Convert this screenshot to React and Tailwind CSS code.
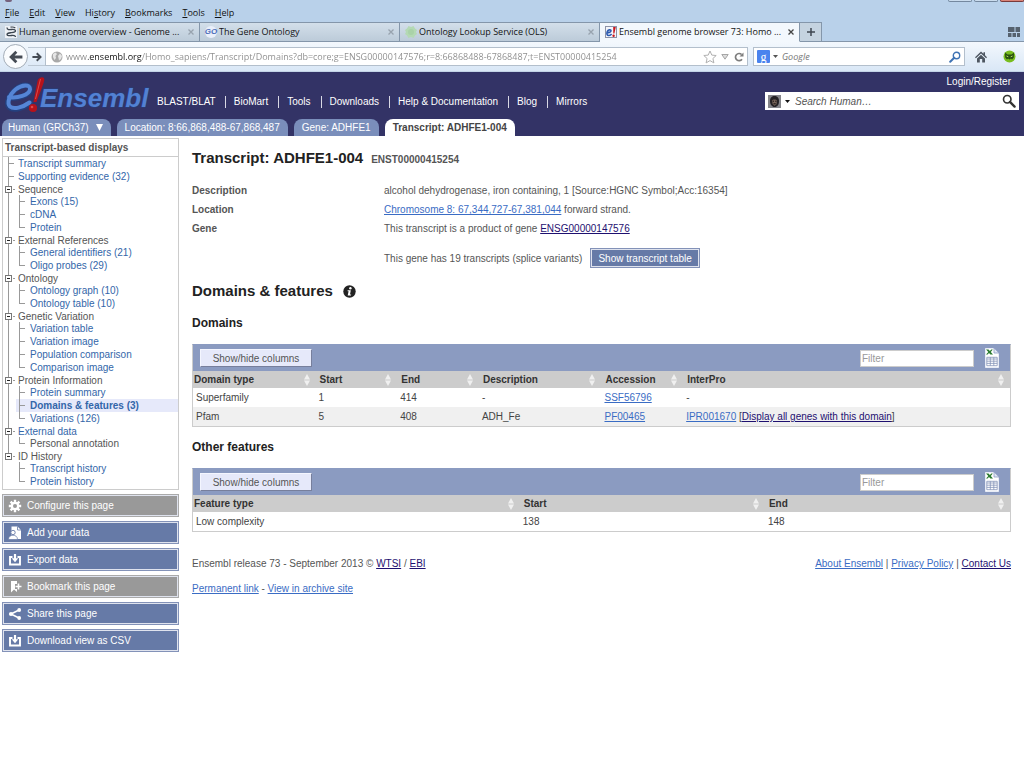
import React from "react";

const UI = "font-['Open_Sans','Noto_Sans',sans-serif]";

/* ---------- icons ---------- */

const NcbiIcon = () => (
  <svg viewBox="0 0 12 12" className="size-3 shrink-0" fill="none" stroke="#3c4650">
    <rect width="12" height="12" fill="#eef2f6" stroke="none" />
    <path d="M2 1.500C2 4 4.500 3.800 6.500 3.500S10.500 3.600 10.500 5 8 6.500 6 6.700 2 7 2 8.500s2.500 1.300 4.500 1S10.500 9.500 10.500 11" strokeWidth="1.300" />
    <path d="M5.500 1.200c2-.4 3.800 0 4.800.8" strokeWidth="1.200" />
  </svg>
);

const GoIcon = () => (
  <span className="flex h-3 w-3 shrink-0 items-center justify-center rounded-full bg-[#e9effa] font-['Liberation_Sans',sans-serif] text-[8px] font-bold italic leading-none text-[#4a6cb8]">
    GO
  </span>
);

const OlsIcon = () => (
  <svg viewBox="0 0 12 12" className="size-3 shrink-0">
    <path d="M3.500 0l2.500 1 2.500-1L10 2.500 12 4l-1 2 1 2-2 1.500L8.500 12 6 11l-2.500 1L2 9.500 0 8l1-2-1-2 2-1.500z" fill="#b4d9b4" />
    <circle cx="6" cy="6" r="3" fill="#a9d2a8" />
  </svg>
);

const EnsemblIcon = () => (
  <svg viewBox="0 0 12 12" className="size-3 shrink-0">
    <rect x=".5" y=".5" width="11" height="11" fill="#f4f6fb" stroke="#8d93a8" />
    <path d="M1.800 6.600c2 .3 4.300-.6 4.200-2S3 3.600 2.200 5.800c-.8 2.200 0 4 1.800 3.700 1.200-.2 2-.9 2.600-1.600" fill="none" stroke="#2d5bb0" strokeWidth="1.600" />
    <path d="M8.200 1h2.600L9.400 7.600h-1.100z" fill="#c9181e" />
    <circle cx="8.600" cy="9.700" r="1.200" fill="#c9181e" />
  </svg>
);

const ArrowIcon = ({ className }) => (
  <svg viewBox="0 0 12 12" className={className} fill="none" stroke="#454b54" strokeWidth="2.400">
    <path d="M11.500 6H2.500M6.300 1.500L1.800 6l4.500 4.500" />
  </svg>
);

const GlobeIcon = () => (
  <svg viewBox="0 0 12 12" className="size-3 shrink-0">
    <circle cx="6" cy="6" r="5.500" fill="#a9a9a9" />
    <path d="M2 3l2.500-1.500L6 3 4.500 5 5 7 3.500 9 2 6zM7 5l2-2.500L11 5l-1 3-2 1.500L7.500 7z" fill="#e6e6e6" />
  </svg>
);

const StarIcon = () => (
  <svg viewBox="0 0 14 14" className="size-[14px]" fill="none" stroke="#b0b0b0" strokeLinejoin="round">
    <path d="M7 1l1.800 4.100 4.400.4-3.300 3 1 4.400L7 10.600l-3.900 2.300 1-4.400-3.300-3 4.400-.4z" />
  </svg>
);

const ReloadIcon = () => (
  <svg viewBox="0 0 10 10" className="size-[10px]" fill="none" stroke="#7d7d7d" strokeWidth="1.700">
    <path d="M8 7.200A3.600 3.600 0 1 1 7.600 2.500" />
    <path d="M9.500.5v4H5.500z" fill="#7d7d7d" stroke="none" />
  </svg>
);

const HomeIcon = () => (
  <svg viewBox="0 0 12 12" className="size-3" fill="#4d5661">
    <path d="M6 .5L0 6.200l.9 1L6 2.500l5.100 4.700.9-1-2-1.900V1.200H8.500v1.600z" />
    <path d="M6 3.700L2 7.400V11.500h2.800V8h2.400v3.500H10V7.400z" />
  </svg>
);

const GhostIcon = () => (
  <svg viewBox="0 0 13 13" className="size-[13px]">
    <circle cx="6.500" cy="6.500" r="6" fill="#78bd1e" />
    <path d="M2 2.500l2.500 2h4l2.500-2-.2 5L9 9.500l-1-1-1.500 1-1.500-1-1 1L2.200 7.500z" fill="#28500f" />
    <path d="M3.500 6l1.800.8M9.500 6l-1.800.8" stroke="#c8ee70" strokeWidth=".9" />
  </svg>
);

const GroupIcon = () => (
  <svg viewBox="0 0 12 12" className="h-3 w-3" fill="#56626f">
    <path d="M0 1h6.500v5H0zM7.500 1H12v5H7.500zM0 7h3.500v4H0zM4.500 7H8v4H4.500zM9 7h3v4H9z" />
  </svg>
);

const Magnifier = ({ className, stroke }) => (
  <svg viewBox="0 0 12 12" className={className} fill="none" stroke={stroke}>
    <circle cx="7.500" cy="4.500" r="3.200" strokeWidth="1.400" />
    <path d="M5.200 6.800L1.200 10.800" strokeWidth="2" strokeLinecap="round" />
  </svg>
);

const SpeciesIcon = () => (
  <svg viewBox="0 0 13 13" className="size-[13px]">
    <rect width="13" height="13" fill="#85858a" />
    <path d="M2 6C2 2.500 4 1 6.500 1S11 2.500 11 6s-1.500 6-4.500 6C4 12 2 9.500 2 6z" fill="#242124" />
    <path d="M4 5.500C4.500 4 8.500 4 9 5.500L8.500 9.200 6.500 10.800 4.600 9z" fill="#77645a" />
    <path d="M4.700 6.200H6M7.200 6.200h1.300M5.500 8.800h2.200" stroke="#15110f" />
  </svg>
);

const Logo = () => (
  <svg viewBox="0 0 146 38" className="h-[38px] w-[146px] shrink-0" role="img" aria-label="e!Ensembl">
    <path d="M4 21.500C12 23 25 19.500 25.500 13.500 25.700 7.500 17 8 10.500 13.500 4 19 .5 27.500 4.500 31.500 8.500 34.800 18 32.500 25 27" fill="none" stroke="#24407f" strokeWidth="5.500" strokeLinecap="round" />
    <path d="M4 21C12 22.500 24.500 19 25 13.300 25.200 7.800 17 8.300 10.500 13.500 4.500 18.500 1.500 27 5 30.500 8.500 33.800 17.500 31.500 24.500 26.500" fill="none" stroke="#5585d6" strokeWidth="4" strokeLinecap="round" />
    <text x="35" y="31" fill="#24407f" fontFamily="Liberation Sans, Arial, sans-serif" fontSize="26" fontWeight="700" fontStyle="italic" stroke="#24407f" strokeWidth="1" paintOrder="stroke">
      <tspan fill="#5381d3">Ensembl</tspan>
    </text>
    <path d="M32.500 5C33.500 1 39.500 0 39.300 3.500 39.200 7 33.500 20 31.500 26h-3z" fill="#b5121b" />
    <path d="M35.500 3L30.500 23" stroke="#dd4a4a" fill="none" />
    <circle cx="28" cy="32" r="4.100" fill="#b5121b" />
    <circle cx="27" cy="31" r="1.300" fill="#dd4a4a" />
  </svg>
);

const InfoIcon = () => (
  <svg viewBox="0 0 13 13" className="size-[13px]">
    <circle cx="6.500" cy="6.500" r="6.200" fill="#222" />
    <circle cx="7.400" cy="3.200" r="1.200" fill="#fff" />
    <path d="M4.600 5.300h3.200L7 9.600h1.200l-.3 1H4.700l.9-4.300h-1z" fill="#fff" />
  </svg>
);

const SortIcon = () => (
  <svg viewBox="0 0 6 12" className="h-3 w-[6px] shrink-0" fill="#f0f0f0">
    <path d="M3 0l3 5.500H0zM3 12l3-5.500H0z" />
  </svg>
);

const SheetIcon = () => (
  <svg viewBox="0 0 14 20" className="h-5 w-[14px]">
    <path d="M.5.500h9l4 4v15H.5z" fill="#fff" stroke="#e8ecf6" />
    <path d="M9 0v5h5z" fill="#dfe5f2" stroke="#8c9cc4" strokeWidth=".8" />
    <path d="M1 1.500h2.500l1.400 1.600 1.400-1.600h1.500L5.800 4l2.200 2.600H5.400L4 5 2.600 6.600H1L3.300 4z" fill="#2b7a2f" />
    <path d="M1.800 9.300h10.400v8.400H1.800zM1.800 11h10.400M5.300 9.300v8.400M8.800 9.300v8.400M1.800 13.200h10.400M1.800 15.400h10.400" fill="none" stroke="#8594b9" strokeWidth=".8" />
  </svg>
);

const GearIcon = () => (
  <svg viewBox="0 0 14 14" className="size-[14px]">
    <g stroke="#fff" strokeWidth="2.400">
      <path d="M7 .8v12.400M.8 7h12.400M2.600 2.600l8.800 8.800M11.400 2.600l-8.800 8.800" />
    </g>
    <circle cx="7" cy="7" r="4.300" fill="#fff" />
    <circle cx="7" cy="7" r="2" fill="#999" />
  </svg>
);

const AddDataIcon = () => (
  <svg viewBox="0 0 14 14" className="size-[14px]">
    <path d="M3.500.500h6l3.500 3.500v9H3.500z" fill="#fff" />
    <path d="M9.500.5V4H13" fill="none" stroke="#667aa7" strokeWidth=".8" />
    <circle cx="5" cy="6.500" r="2.200" fill="#fff" stroke="#667aa7" strokeWidth=".9" />
    <path d="M.5 13.500c0-3 2-4.200 4.500-4.200s4.500 1.200 4.500 4.200z" fill="#fff" stroke="#667aa7" strokeWidth=".7" />
  </svg>
);

const ExportIcon = () => (
  <svg viewBox="0 0 14 14" className="size-[14px]">
    <path d="M4.500 4H2v7.500h10V4H9.500" fill="none" stroke="#fff" strokeWidth="1.900" />
    <path d="M5.900 1h2.200v4.300h2.200L7 9.200 3.700 5.300h2.200z" fill="#fff" />
  </svg>
);

const BookmarkIcon = () => (
  <svg viewBox="0 0 14 14" className="size-[14px]">
    <path d="M3 1h6v3H7v5h2v3L6 9.500 3 12.500z" fill="#fff" />
    <path d="M10.500 3.500v6M7.500 6.500h6" stroke="#fff" strokeWidth="1.600" />
  </svg>
);

const ShareIcon = () => (
  <svg viewBox="0 0 14 14" className="size-[14px]">
    <path d="M11 3L3 7l8 4" fill="none" stroke="#fff" strokeWidth="1.600" />
    <circle cx="11.200" cy="3" r="1.900" fill="#fff" />
    <circle cx="3" cy="7" r="2.100" fill="#fff" />
    <circle cx="11.200" cy="11" r="1.900" fill="#fff" />
  </svg>
);

/* ---------- browser ---------- */

const menus = [
  ["", "F", "ile"],
  ["", "E", "dit"],
  ["", "V", "iew"],
  ["Hi", "s", "tory"],
  ["", "B", "ookmarks"],
  ["", "T", "ools"],
  ["", "H", "elp"],
];

const browserTabs = [
  { icon: <NcbiIcon />, label: "Human genome overview - Genome ..." },
  { icon: <GoIcon />, label: "The Gene Ontology" },
  { icon: <OlsIcon />, label: "Ontology Lookup Service (OLS)" },
  { icon: <EnsemblIcon />, label: "Ensembl genome browser 73: Homo ...", active: true },
];

function BrowserTab({ icon, label, active }) {
  return (
    <div
      className={`flex w-[200px] items-center gap-[2px] border border-l-0 border-t-[#8496aa] border-r-[#8496aa] pr-[5px] pl-[5px] ${
        active ? "border-b-[#f3f8fd] bg-[#f3f8fd]" : "border-b-[#8496aa] bg-linear-to-b from-[#d3dfea] to-[#bccbd9]"
      }`}
    >
      {icon}
      <button className="min-w-0 flex-1 truncate text-left text-[9px] text-[#141414]">{label}</button>
      <button aria-label="Close tab" className={active ? "text-[#444]" : "text-[#98a3ae]"}>
        <svg viewBox="0 0 6 6" className="size-[6px]" stroke="currentColor" strokeWidth="1.300">
          <path d="M.5.5l5 5M5.500.5l-5 5" />
        </svg>
      </button>
    </div>
  );
}

function Browser() {
  return (
    <div className={UI}>
      <div className="bg-[#b9d1ea]">
        <div className="flex h-[5px] items-start gap-[2px] pl-[5px]">
          <span className="mr-auto h-[2px] w-[7px] rounded-b-full bg-[#75627c]" />
          <span className="h-[2px] w-6 rounded-b-sm border border-t-0 border-[#74889f] bg-[#cadcee]" />
          <span className="h-[2px] w-6 rounded-b-sm border border-t-0 border-[#74889f] bg-[#cadcee]" />
          <span className="h-[2px] w-6 rounded-b-sm border border-t-0 border-[#7a3a3a] bg-[#d98378]" />
        </div>
        <nav className="flex h-[17px] gap-[10px] pb-px pl-[5px] text-[9px] text-[#111]">
          {menus.map(([a, key, b]) => (
            <button key={key + b}>
              {a}
              <span className="underline">{key}</span>
              {b}
            </button>
          ))}
        </nav>
        <div className="flex h-5">
          {browserTabs.map((t) => (
            <BrowserTab key={t.label} {...t} />
          ))}
          <button aria-label="New tab" className="flex w-[22px] items-center justify-center border border-l-0 border-[#8496aa] bg-[#c5d3e0]">
            <svg viewBox="0 0 8 8" className="size-2" stroke="#3f4750" strokeWidth="1.500">
              <path d="M4 0v8M0 4h8" />
            </svg>
          </button>
          <div className="flex flex-1 items-center justify-end border-b border-[#8496aa] pr-1">
            <button aria-label="Tab groups">
              <GroupIcon />
            </button>
          </div>
        </div>
      </div>
      <div className="flex h-[30px] items-center border-b border-[#c3d3e6] bg-linear-to-b from-[#f3f8fd] to-[#d9e7f6] pr-2 pl-[3px]">
        <button aria-label="Back" className="flex size-[25px] shrink-0 items-center justify-center rounded-full border border-[#a3adb8] bg-[#fafcfe]">
          <ArrowIcon className="size-[14px]" />
        </button>
        <button aria-label="Forward" className="flex h-[19px] w-[17px] shrink-0 items-center justify-center border-y border-[#bcc8d4]">
          <ArrowIcon className="size-[10px] rotate-180" />
        </button>
        <div className="flex h-[19px] flex-1 items-center border border-[#b3bfcc] bg-white pl-[5px]">
          <GlobeIcon />
          <input
            aria-label="Address"
            defaultValue="www.ensembl.org/Homo_sapiens/Transcript/Domains?db=core;g=ENSG00000147576;r=8:66868488-67868487;t=ENST00000415254"
            className="ml-[3px] min-w-0 flex-1 bg-linear-[90deg,#8b8b8b_22px,#111_22px,#111_76px,#8b8b8b_76px] bg-clip-text text-[9px] text-transparent outline-none"
          />
          <button aria-label="Bookmark this page" className="ml-1">
            <StarIcon />
          </button>
          <button aria-label="Show history" className="ml-[3px] flex w-[10px] justify-center">
            <svg viewBox="0 0 8 6" className="h-[6px] w-2" fill="#ddd" stroke="#a6a6a6">
              <path d="M.8.500h6.400L4 5.200z" />
            </svg>
          </button>
          <button aria-label="Reload" className="mr-[3px] ml-1 flex w-[10px] justify-center">
            <ReloadIcon />
          </button>
        </div>
        <div className="ml-[5px] flex h-[19px] w-[212px] items-center border border-[#b3bfcc] bg-white px-[3px]">
          <button aria-label="Search engine" className="flex items-center gap-[3px]">
            <span className="flex h-[13px] w-[13px] items-center justify-center rounded-[1px] bg-[#4a83ee] font-['Liberation_Serif',serif] text-[12px] leading-none text-white">
              g
            </span>
            <svg viewBox="0 0 5 3" className="h-[3px] w-[5px]" fill="#555">
              <path d="M0 0h5L2.500 3z" />
            </svg>
          </button>
          <input aria-label="Web search" placeholder="Google" className="ml-1 min-w-0 flex-1 text-[9px] italic outline-none placeholder:text-[#777]" />
          <button aria-label="Search the web">
            <Magnifier className="size-3" stroke="#3f73b4" />
          </button>
        </div>
        <button aria-label="Home" className="ml-[10px]">
          <HomeIcon />
        </button>
        <button aria-label="Add-on" className="ml-4">
          <GhostIcon />
        </button>
      </div>
    </div>
  );
}

/* ---------- site header ---------- */

const navItems = ["BLAST/BLAT", "BioMart", "Tools", "Downloads", "Help & Documentation", "Blog", "Mirrors"];

const pageTabs = ["Location: 8:66,868,488-67,868,487", "Gene: ADHFE1"];

function Header() {
  return (
    <header className="bg-[#333366] text-white">
      <div className="flex h-[47px] pr-[5px] pl-[5px]">
        <div className="pt-1">
          <Logo />
        </div>
        <nav className="flex flex-1 items-center pt-[13px] text-[10px] leading-3">
          {navItems.map((n, i) => (
            <a key={n} href="#" className={i ? "border-l border-[#d8d8e4] pr-[10px] pl-2" : "pr-[9px] pl-[6px]"}>
              {n}
            </a>
          ))}
        </nav>
        <div className="flex w-[254px] flex-col items-end pt-1">
          <a href="#" className="pr-2 text-[10px] leading-3">
            Login/Register
          </a>
          <div className="mt-1 flex h-[18px] w-full items-center bg-white px-[3px]">
            <button aria-label="Choose species" className="flex items-center gap-1">
              <SpeciesIcon />
              <svg viewBox="0 0 5 3" className="h-[3px] w-[5px]" fill="#111">
                <path d="M0 0h5L2.500 3z" />
              </svg>
            </button>
            <input
              aria-label="Search Human"
              placeholder="Search Human…"
              className="ml-[5px] min-w-0 flex-1 text-[10px] text-[#333] italic outline-none placeholder:text-[#555]"
            />
            <button aria-label="Search">
              <Magnifier className="size-[14px] -scale-x-100" stroke="#333" />
            </button>
          </div>
        </div>
      </div>
      <div className="flex h-[17px] gap-[6px] pl-[2px] text-[10px]">
        <button className="flex items-center gap-[7px] rounded-t-lg bg-[#7a8ebb] pr-2 pl-[6px]">
          Human (GRCh37)
          <svg viewBox="0 0 7 7" className="size-[7px]" fill="#fff">
            <path d="M0 0h7L3.500 7z" />
          </svg>
        </button>
        {pageTabs.map((t) => (
          <a key={t} href="#" className="flex items-center rounded-t-lg bg-[#7a8ebb] px-2">
            {t}
          </a>
        ))}
        <a href="#" className="flex items-center rounded-t-lg bg-white px-2 font-bold text-[#444]">
          Transcript: ADHFE1-004
        </a>
      </div>
    </header>
  );
}

/* ---------- sidebar ---------- */

const tree = [
  { label: "Transcript summary", link: true },
  { label: "Supporting evidence (32)", link: true },
  { label: "Sequence", children: ["Exons (15)", "cDNA", "Protein"] },
  { label: "External References", children: ["General identifiers (21)", "Oligo probes (29)"] },
  { label: "Ontology", children: ["Ontology graph (10)", "Ontology table (10)"] },
  { label: "Genetic Variation", children: ["Variation table", "Variation image", "Population comparison", "Comparison image"] },
  { label: "Protein Information", children: ["Protein summary", "Domains & features (3)", "Variations (126)"] },
  { label: "External data", link: true, children: ["Personal annotation"] },
  { label: "ID History", children: ["Transcript history", "Protein history"] },
];

const current = "Domains & features (3)";
const plain = ["Personal annotation"];

const TreeBranch = ({ last }) => (
  <svg viewBox="0 0 10 13" className="h-[13px] w-[10px] shrink-0" fill="none" stroke="#999">
    <path d={last ? "M1.500 0v6.500M1 6.500h6" : "M1.500 0v13M1 6.500h6"} />
  </svg>
);

const TreeToggle = ({ last }) => (
  <svg viewBox="0 0 13 12" className="h-3 w-[13px]" fill="none" stroke="#999">
    <path d={last ? "M3.500 0v3M8 6.500h2" : "M3.500 0v12M8 6.500h2"} />
    <rect x=".5" y="3.500" width="6" height="6" fill="#fff" stroke="#777" />
    <path d="M2 6.500h3" stroke="#222" />
  </svg>
);

function Tree() {
  return (
    <ul className="pb-px pl-[2px]">
      {tree.map((node, i) => {
        const last = i === tree.length - 1;
        const label = node.link ? (
          <a href="#" className="text-[#3366a9]">
            {node.label}
          </a>
        ) : (
          <span>{node.label}</span>
        );
        if (!node.children)
          return (
            <li key={node.label} className="flex h-[13px] items-center pl-[2px]">
              <span className="flex w-[11px]">
                <TreeBranch />
              </span>
              {label}
            </li>
          );
        return (
          <li key={node.label}>
            <div className="flex h-3 items-center">
              <button aria-label={`Collapse ${node.label}`}>
                <TreeToggle last={last} />
              </button>
              {label}
            </div>
            <ul className={`ml-[3px] border-l pl-[7px] ${last ? "border-transparent" : "border-[#999]"}`}>
              {node.children.map((c, j) => (
                <li key={c} className={`flex h-[13px] items-center pl-[2px] ${c === current ? "bg-[#e6e9fa] font-bold" : ""}`}>
                  <span className="flex w-[12px]">
                    <TreeBranch last={j === node.children.length - 1} />
                  </span>
                  {plain.includes(c) ? (
                    <span>{c}</span>
                  ) : (
                    <a href="#" className="text-[#3366a9]">
                      {c}
                    </a>
                  )}
                </li>
              ))}
            </ul>
          </li>
        );
      })}
    </ul>
  );
}

const actions = [
  { label: "Configure this page", icon: <GearIcon />, off: true },
  { label: "Add your data", icon: <AddDataIcon /> },
  { label: "Export data", icon: <ExportIcon /> },
  { label: "Bookmark this page", icon: <BookmarkIcon />, off: true },
  { label: "Share this page", icon: <ShareIcon /> },
  { label: "Download view as CSV", icon: <ExportIcon /> },
];

function Sidebar() {
  return (
    <aside className="w-[177px] shrink-0 pt-[2px] text-[#555]">
      <div className="border border-[#ccc]">
        <h2 className="h-[18px] border-b border-[#ccc] pl-[2px] font-bold leading-[17px]">Transcript-based displays</h2>
        <Tree />
      </div>
      <div className="mt-1 flex flex-col gap-1">
        {actions.map((a) => (
          <button
            key={a.label}
            className={`flex h-[23px] items-center gap-[5px] border pl-[5px] text-white outline-1 -outline-offset-2 outline-[#dfe3ee] ${
              a.off ? "border-[#aaa] bg-[#999]" : "border-[#8392b8] bg-[#667aa7]"
            }`}
          >
            {a.icon}
            {a.label}
          </button>
        ))}
      </div>
    </aside>
  );
}

/* ---------- main ---------- */

const A = ({ visited, children }) => (
  <a href="#" className={`underline ${visited ? "text-[#1e1070]" : "text-[#3a6cc4]"}`}>
    {children}
  </a>
);

function DataTable({ columns, rows }) {
  return (
    <div className="border border-[#ccc] border-t-[#8b9bc1]">
      <div className="flex h-[26px] items-center bg-[#8b9bc1] pr-[11px] pl-[7px]">
        <button className="h-[18px] w-[112px] border border-[#f4f6ff] border-r-[#777f9c] border-b-[#777f9c] bg-[#e6e9fa] text-[#555]">
          Show/hide columns
        </button>
        <input
          aria-label="Filter"
          placeholder="Filter"
          className="ml-auto h-[17px] w-[114px] border border-[#ccc] bg-white px-[1px] outline-none placeholder:text-[#999]"
        />
        <button aria-label="Download table" className="ml-[11px]">
          <SheetIcon />
        </button>
      </div>
      <table className="w-full table-fixed border-collapse text-left">
        <thead>
          <tr className="h-[17px] bg-[#ccc] text-[#333]">
            {columns.map(([name, width], i) => (
              <th key={name} className={`${width} p-0`}>
                <div className={`flex items-center justify-between pr-[6px] ${i ? "pl-1" : "pl-[1px]"}`}>
                  {name}
                  <SortIcon />
                </div>
              </th>
            ))}
          </tr>
        </thead>
        <tbody>
          {rows.map((r) => (
            <tr key={r[0]} className="h-[19px] text-[#444] even:bg-[#f0f0f0]">
              {r.map((c, i) => (
                <td key={i} className="py-0 pr-0 pl-[3px]">
                  {c}
                </td>
              ))}
            </tr>
          ))}
        </tbody>
      </table>
    </div>
  );
}

const summary = [
  ["Description", "alcohol dehydrogenase, iron containing, 1 [Source:HGNC Symbol;Acc:16354]"],
  [
    "Location",
    <>
      <A>Chromosome 8: 67,344,727-67,381,044</A> forward strand.
    </>,
  ],
  [
    "Gene",
    <>
      This transcript is a product of gene <A visited>ENSG00000147576</A>
    </>,
  ],
];

function Main() {
  return (
    <main className="min-w-0 flex-1 px-[13px] pt-[13px] text-[#555]">
      <h1 className="flex items-baseline gap-2 text-[15px] leading-[18px] font-bold text-[#222]">
        Transcript: ADHFE1-004 <span className="text-[10px] text-[#555]">ENST00000415254</span>
      </h1>
      <dl className="mt-3">
        {summary.map(([k, v]) => (
          <div key={k} className="flex h-[19px] items-center">
            <dt className="w-[192px] shrink-0 font-bold">{k}</dt>
            <dd>{v}</dd>
          </div>
        ))}
      </dl>
      <div className="mt-[10px] flex h-5 items-center gap-2 pl-[192px]">
        This gene has 19 transcripts (splice variants)
        <button className="h-5 border border-[#8392b8] bg-[#667aa7] px-[7px] text-white outline-1 -outline-offset-2 outline-[#dfe3ee]">
          Show transcript table
        </button>
      </div>
      <h2 className="mt-[14px] flex items-center gap-[10px] text-[15px] leading-[18px] font-bold text-[#222]">
        Domains &amp; features
        <InfoIcon />
      </h2>
      <h3 className="mt-4 mb-[13px] text-[12px] leading-[15px] font-bold text-[#222]">Domains</h3>
      <DataTable
        columns={[
          ["Domain type", "w-[15%]"],
          ["Start", "w-[10%]"],
          ["End", "w-[10%]"],
          ["Description", "w-[15%]"],
          ["Accession", "w-[10%]"],
          ["InterPro", "w-[40%]"],
        ]}
        rows={[
          ["Superfamily", "1", "414", "-", <A>SSF56796</A>, "-"],
          [
            "Pfam",
            "5",
            "408",
            "ADH_Fe",
            <A>PF00465</A>,
            <>
              <A>IPR001670</A> [<A visited>Display all genes with this domain</A>]
            </>,
          ],
        ]}
      />
      <h3 className="my-[13px] text-[12px] leading-[15px] font-bold text-[#222]">Other features</h3>
      <DataTable
        columns={[
          ["Feature type", "w-[40%]"],
          ["Start", "w-[30%]"],
          ["End", "w-[30%]"],
        ]}
        rows={[["Low complexity", "138", "148"]]}
      />
      <footer className="mt-6">
        <div className="flex justify-between">
          <p>
            Ensembl release 73 - September 2013 © <A visited>WTSI</A> / <A visited>EBI</A>
          </p>
          <p>
            <A>About Ensembl</A> | <A>Privacy Policy</A> | <A visited>Contact Us</A>
          </p>
        </div>
        <p className="mt-[10px]">
          <A>Permanent link</A> - <A>View in archive site</A>
        </p>
      </footer>
    </main>
  );
}

export default function App() {
  return (
    <div className="min-h-screen bg-white font-['Liberation_Sans',Arial,sans-serif]">
      <Browser />
      <Header />
      <div className="flex pl-[2px] text-[10px] leading-[15px]">
        <Sidebar />
        <Main />
      </div>
    </div>
  );
}
